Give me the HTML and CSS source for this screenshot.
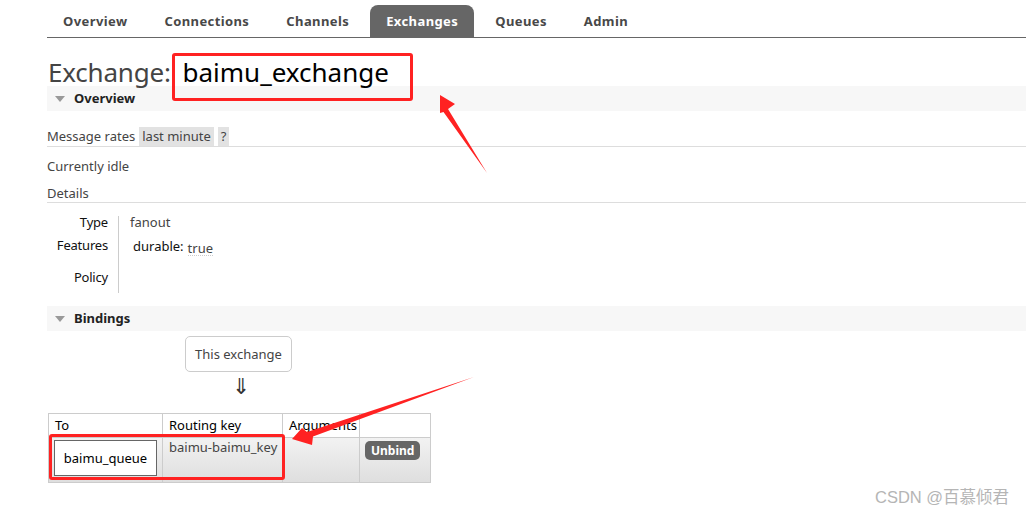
FILE: index.html
```html
<!DOCTYPE html>
<html>
<head>
<meta charset="utf-8">
<link rel="stylesheet" href="styles.css">
</head>
<body>
<div class="page">
  <nav class="tabs">
    <a class="tab">Overview</a>
    <a class="tab">Connections</a>
    <a class="tab">Channels</a>
    <a class="tab tab-active">Exchanges</a>
    <a class="tab">Queues</a>
    <a class="tab">Admin</a>
  </nav>

  <h1 class="title"><span class="title-label">Exchange:</span> <span class="title-name">baimu_exchange</span></h1>

  <div class="section-head"><span class="tri"></span>Overview</div>

  <div class="rates-row">
    <span>Message rates</span>
    <span class="chip">last minute</span>
    <span class="chip">?</span>
  </div>
  <p class="idle">Currently idle</p>
  <div class="details-head">Details</div>

  <div class="facts">
    <div class="fact-label r1">Type</div><div class="fact-val r1">fanout</div>
    <div class="fact-label r2">Features</div><div class="fact-val r2"><span class="feat-key">durable:</span><span class="feat-val">true</span></div>
    <div class="fact-label r3">Policy</div><div class="fact-val r3"></div>
  </div>

  <div class="section-head bindings-head"><span class="tri"></span>Bindings</div>

  <div class="this-exchange">This exchange</div>
  <div class="down-arrow">⇓</div>

  <table class="bindings">
    <colgroup>
      <col class="w1"><col class="w2"><col class="w3"><col class="w4">
    </colgroup>
    <thead>
      <tr><th>To</th><th>Routing key</th><th>Arguments</th><th></th></tr>
    </thead>
    <tbody>
      <tr>
        <td class="c1"><div class="queue-box">baimu_queue</div></td>
        <td class="rk">baimu-baimu_key</td>
        <td></td>
        <td class="c4"><span class="unbind">Unbind</span></td>
      </tr>
    </tbody>
  </table>
</div>

<div class="annot-box box-title"></div>
<div class="annot-box box-row"></div>
<svg class="annot-arrows" width="1026" height="516" viewBox="0 0 1026 516">
  <polygon fill="#ff2222" points="440,95 455,104 448,109 487,173 443.5,112 440,113"/>
  <polygon fill="#ff2222" points="292,439 302,428 307,432 474,377 313,436.5 312,445"/>
</svg>

<div class="watermark">CSDN @百慕倾君</div>
</body>
</html>
```

FILE: styles.css
```css
html, body {
  margin: 0;
  padding: 0;
  background: #fff;
}

body {
  width: 1026px;
  height: 516px;
  overflow: hidden;
  position: relative;
  font-family: "Noto Sans", "DejaVu Sans", sans-serif;
  font-size: 13px;
  color: #444;
}

.page {
  padding-left: 47px;
}

/* nav tabs */
.tabs {
  display: flex;
  gap: 5px;
  margin-top: 5px;
  border-bottom: 1px solid #666;
  height: 32px;
}

.tab {
  display: block;
  padding: 0 16px;
  height: 32px;
  line-height: 32px;
  font-weight: bold;
  font-size: 13px;
  color: #484848;
  letter-spacing: 0.4px;
}

.tab-active {
  background: #666;
  color: #fff;
  border-radius: 8px 8px 0 0;
}

/* title */
.title {
  margin: 20px 0 0 0;
  height: 28px;
  line-height: 28px;
  font-size: 26px;
  font-weight: normal;
  padding-left: 1px;
}

.title-label {
  color: #444;
  letter-spacing: -0.2px;
}

.title-name {
  color: #000;
  margin-left: 5px;
}

/* section headers */
.section-head {
  height: 25px;
  line-height: 25px;
  background: #f7f7f7;
  font-weight: bold;
  color: #222;
  display: flex;
  align-items: center;
}

.tri {
  width: 0;
  height: 0;
  border-left: 5px solid transparent;
  border-right: 5px solid transparent;
  border-top: 6px solid #999;
  margin: 1px 9px 0 8px;
}

/* rates */
.rates-row {
  margin-top: 16px;
  height: 19px;
  line-height: 19px;
  display: flex;
  border-bottom: 1px solid #ddd;
}

.rates-row > span:first-child {
  margin-right: 4px;
}

.chip {
  background: #e2e2e2;
  padding: 0 3px;
  margin-right: 4px;
}

.idle {
  margin: 10px 0 0 0;
  height: 18px;
  line-height: 18px;
}

.details-head {
  margin-top: 9px;
  height: 18px;
  line-height: 18px;
  border-bottom: 1px solid #ddd;
}

/* facts table */
.facts {
  margin-top: 13px;
  display: grid;
  grid-template-columns: 72px auto;
  grid-template-rows: 13px 31px 33px;
  width: 300px;
}

.fact-label {
  text-align: right;
  padding-right: 10px;
  border-right: 1px solid #ccc;
  color: #111;
  line-height: 13px;
  letter-spacing: -0.2px;
}

.fact-val {
  padding-left: 11px;
  line-height: 13px;
}

.r1 { padding-top: 0; }
.r2 { padding-top: 10px; }
.r3 { padding-top: 11px; }

.feat-key {
  color: #111;
  margin-left: 3px;
  margin-right: 4px;
}

.feat-val {
  display: inline-block;
  position: relative;
  top: 2px;
  border-bottom: 1px dotted #ccc;
  line-height: 14px;
}

.bindings-head {
  margin-top: 13px;
}

/* bindings */
.this-exchange {
  margin: 5px 0 0 138px;
  width: 105px;
  height: 34px;
  line-height: 34px;
  text-align: center;
  border: 1px solid #ccc;
  border-radius: 5px;
}

.down-arrow {
  margin-left: 185px;
  width: 14px;
  height: 41px;
  line-height: 30px;
  font-size: 22px;
  font-family: "DejaVu Sans", sans-serif;
  color: #333;
}

.bindings {
  margin-left: 1px;
  border-collapse: collapse;
  border: 1px solid #ccc;
  table-layout: fixed;
  width: 383px;
}

.w1 { width: 114px; }
.w2 { width: 120px; }
.w3 { width: 77px; }
.w4 { width: 71px; }

.bindings th,
.bindings td {
  border: 1px solid #ccc;
  padding: 0;
}

.bindings th {
  height: 23px;
  text-align: left;
  font-weight: normal;
  color: #000;
  padding-left: 6px;
  line-height: 23px;
  white-space: nowrap;
  overflow: visible;
}

.bindings tbody tr {
  height: 45px;
  background: linear-gradient(#f2f2f2, #dedede);
}

.bindings td {
  vertical-align: top;
}

.bindings td.c1 {
  padding: 2px 5px 0 5px;
}

.queue-box {
  height: 34px;
  line-height: 34px;
  background: #fff;
  border: 1px solid #666;
  text-align: center;
  color: #000;
}

.bindings td.rk {
  padding: 0 0 0 6px;
  line-height: 18px;
  color: #444;
  white-space: nowrap;
}

.bindings td.c4 {
  padding: 3px 0 0 5px;
}

.unbind {
  display: inline-block;
  background: #666;
  color: #fff;
  font-weight: bold;
  font-size: 12px;
  height: 19px;
  line-height: 19px;
  padding: 0 6px;
  border-radius: 5px;
}

/* annotations */
.annot-box {
  position: absolute;
  border: 3px solid #ff2222;
  border-radius: 3px;
  box-sizing: border-box;
}

.box-title {
  left: 172px;
  top: 53px;
  width: 241px;
  height: 48px;
}

.box-row {
  left: 49px;
  top: 434px;
  width: 236px;
  height: 46px;
}

.annot-arrows {
  position: absolute;
  left: 0;
  top: 0;
  pointer-events: none;
}

.watermark {
  position: absolute;
  left: 875px;
  top: 486px;
  font-family: "Liberation Sans", "Noto Sans CJK SC", sans-serif;
  font-size: 16.5px;
  color: #b5b5b5;
  line-height: 22px;
}
```
